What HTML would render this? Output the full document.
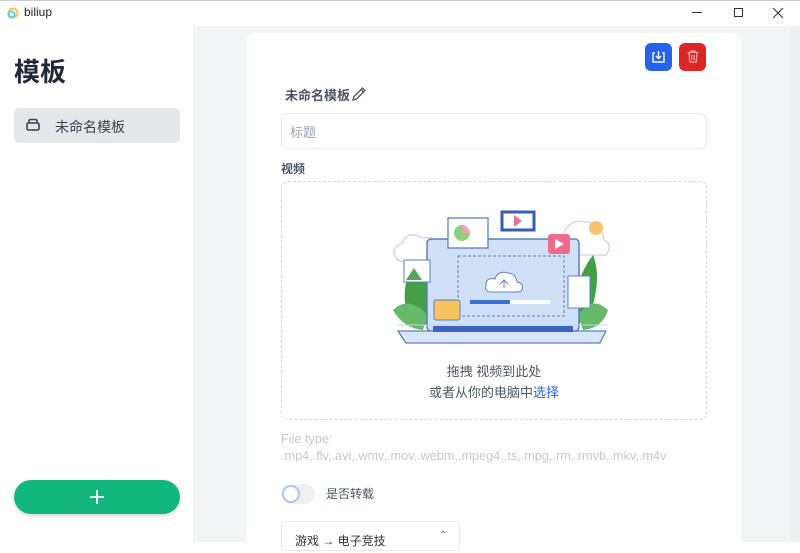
<!DOCTYPE html>
<html><head><meta charset="utf-8"><style>
*{box-sizing:border-box;margin:0;padding:0}
body{width:800px;height:542px;overflow:hidden;background:#fff;font-family:"Liberation Sans","Noto Sans CJK SC",sans-serif;position:relative}
.abs{position:absolute}
</style></head><body>
<div class="abs" style="left:0;top:0;width:800px;height:26px;background:#fff;border-top:1px solid #ccc"></div>
<svg class="abs" style="left:7px;top:7px" width="12" height="12"><circle cx="6" cy="6" r="4.5" fill="none" stroke="#f5c542" stroke-width="2"/><circle cx="4.5" cy="7.5" r="3" fill="none" stroke="#5bc8e8" stroke-width="2"/></svg>
<div class="abs" style="left:24px;top:5px;font-size:12px;color:#222">biliup</div>
<div class="abs" style="left:692px;top:12px;width:10px;height:1px;background:#333"></div>
<div class="abs" style="left:734px;top:8px;width:9px;height:9px;border:1px solid #333"></div>
<svg class="abs" style="left:772px;top:7px" width="12" height="12"><path d="M1 1L11 11M11 1L1 11" stroke="#333" stroke-width="1.1"/></svg>
<div class="abs" style="left:0;top:26px;width:195px;height:516px;background:#fff;border-right:1px solid #e5e7eb"></div>
<div class="abs" style="left:14px;top:52px;font-size:26px;font-weight:bold;color:#1f2937">模板</div>
<div class="abs" style="left:14px;top:108px;width:166px;height:35px;background:#e5e7eb;border-radius:5px"></div>
<svg class="abs" style="left:25px;top:118px" width="16" height="14"><rect x="2" y="5" width="12" height="7" rx="1.5" fill="none" stroke="#374151" stroke-width="1.6"/><path d="M4 5V3Q4 1.5 5.5 1.5H10.5Q12 1.5 12 3V5" fill="none" stroke="#374151" stroke-width="1.6"/></svg>
<div class="abs" style="left:55px;top:117px;font-size:14px;color:#374151">未命名模板</div>
<div class="abs" style="left:14px;top:480px;width:166px;height:34px;background:#13b77e;border-radius:17px;box-shadow:0 2px 4px rgba(0,0,0,.15)"></div>
<svg class="abs" style="left:89px;top:489px" width="16" height="16"><path d="M8 1V15M1 8H15" stroke="#fff" stroke-width="1.8"/></svg>
<div class="abs" style="left:196px;top:26px;width:604px;height:516px;background:#f3f4f6"></div>
<div class="abs" style="left:790px;top:26px;width:10px;height:516px;background:#eceef0"></div>
<div class="abs" style="left:247px;top:33px;width:494px;height:520px;background:#fff;border-radius:8px"></div>
<div class="abs" style="left:645px;top:43px;width:27px;height:28px;background:#2563eb;border-radius:6px"></div>
<svg class="abs" style="left:651px;top:50px" width="15" height="14"><path d="M4 3H2V12H13V3H11M7.5 1V8M5 6L7.5 8.5L10 6" fill="none" stroke="#fff" stroke-width="1.4"/></svg>
<div class="abs" style="left:679px;top:43px;width:27px;height:28px;background:#dc2626;border-radius:6px"></div>
<svg class="abs" style="left:686px;top:49px" width="14" height="15"><path d="M1.5 3.5H12.5M5 3.5V2H9V3.5M3 3.5L3.7 13H10.3L11 3.5M5.7 6V11M8.3 6V11" fill="none" stroke="#fca5a5" stroke-width="1.3"/></svg>
<div class="abs" style="left:285px;top:85px;font-size:13px;font-weight:bold;color:#4b5563">未命名模板</div>
<svg class="abs" style="left:351px;top:86px" width="16" height="16"><path d="M2 14L3 10.5L11.5 2L14 4.5L5.5 13Z M10 3.5L12.5 6" fill="none" stroke="#4b5563" stroke-width="1.3"/></svg>
<div class="abs" style="left:281px;top:113px;width:426px;height:36px;border:1px solid #e5e7eb;border-radius:7px"></div>
<div class="abs" style="left:290px;top:122px;font-size:13px;color:#9ca3af">标题</div>
<div class="abs" style="left:281px;top:160px;font-size:12px;font-weight:bold;color:#4b5563">视频</div>
<div class="abs" style="left:281px;top:181px;width:426px;height:239px;border:1px dashed #d1d5db;border-radius:7px"></div>
<svg class="abs" style="left:378px;top:200px" width="236" height="146" viewBox="0 0 236 146">
<path d="M20 60Q10 50 25 42Q30 30 45 38Q60 35 60 50Q65 62 50 62H25Z" fill="#fff" stroke="#c7d4e8" stroke-width="1.3"/>
<path d="M185 35Q190 18 210 22Q225 25 226 40Q236 45 228 55H190Q175 52 185 35Z" fill="#fff" stroke="#c7d4e8" stroke-width="1.3"/>
<circle cx="218" cy="28" r="7" fill="#f6c56b"/>
<path d="M30 120Q20 80 40 60Q55 90 50 125Z" fill="#43a047"/>
<path d="M15 110Q30 95 50 115L45 130Q25 128 15 110Z" fill="#66bb6a"/>
<path d="M210 120Q225 80 215 55Q195 80 195 125Z" fill="#43a047"/>
<path d="M230 110Q215 95 200 115L205 130Q225 128 230 110Z" fill="#66bb6a"/>
<rect x="49" y="39" width="152" height="92" rx="4" fill="#cfe0f7" stroke="#5b7fc0" stroke-width="1.5"/>
<rect x="80" y="56" width="106" height="60" fill="none" stroke="#5b7fc0" stroke-dasharray="3 2"/>
<path d="M113 92Q106 92 108 85Q108 77 117 79Q120 70 130 73Q138 74 139 82Q146 83 144 90Q143 92 138 92Z" fill="#fff" stroke="#5b7fc0"/>
<path d="M126 80V88M122 84L126 80L130 84" stroke="#5b7fc0" fill="none"/>
<rect x="92" y="100" width="80" height="4" fill="#fff"/><rect x="92" y="100" width="40" height="4" fill="#3b6fd0"/>
<rect x="70" y="18" width="40" height="30" fill="#fff" stroke="#5b7fc0" stroke-width="1.3"/>
<circle cx="84" cy="33" r="8" fill="#8bd17c"/><path d="M84 33V25A8 8 0 0 1 92 33Z" fill="#f4a3b5"/>
<rect x="124" y="12" width="32" height="18" fill="#fff" stroke="#2f5db8" stroke-width="3"/><path d="M136 15L144 21L136 27Z" fill="#e57390"/>
<rect x="170" y="34" width="22" height="20" rx="3" fill="#f06a8a"/><path d="M177 39L186 44L177 49Z" fill="#fff"/>
<rect x="26" y="60" width="26" height="22" fill="#fff" stroke="#5b7fc0"/><path d="M28 80L36 68L44 80Z" fill="#5aa55c"/>
<rect x="56" y="100" width="26" height="20" rx="2" fill="#f8c25c" stroke="#5b7fc0"/>
<rect x="190" y="76" width="22" height="32" fill="#fff" stroke="#5b7fc0"/>
<path d="M20 125H230" stroke="#c7d4e8"/>
<path d="M20 131H228L222 143H28Z" fill="#d9e6f7" stroke="#5b7fc0" stroke-width="1.3"/>
<rect x="55" y="126" width="140" height="6" fill="#3a65c0"/>
</svg>
<div class="abs" style="left:281px;top:361px;width:426px;text-align:center;font-size:13px;color:#4b5563">拖拽 视频到此处</div>
<div class="abs" style="left:281px;top:382px;width:426px;text-align:center;font-size:13px;color:#4b5563">或者从你的电脑中<span style="color:#2563eb">选择</span></div>
<div class="abs" style="left:281px;top:431px;font-size:12.7px;color:#c4c8cf;line-height:17px">File type:<br>.mp4,.flv,.avi,.wmv,.mov,.webm,.mpeg4,.ts,.mpg,.rm,.rmvb,.mkv,.m4v</div>
<div class="abs" style="left:281px;top:484px;width:34px;height:20px;background:#eef0f3;border-radius:10px"></div>
<div class="abs" style="left:282px;top:485px;width:18px;height:18px;background:#fff;border:2px solid #a9c7f5;border-radius:50%"></div>
<div class="abs" style="left:326px;top:485px;font-size:12px;color:#4b5563">是否转载</div>
<div class="abs" style="left:281px;top:521px;width:179px;height:30px;border:1px solid #e5e7eb;border-radius:5px"></div>
<div class="abs" style="left:295px;top:532px;font-size:12px;color:#333">游戏 → 电子竞技</div>
<div class="abs" style="left:439px;top:530px;font-size:10px;color:#666">⌃</div>
</body></html>
